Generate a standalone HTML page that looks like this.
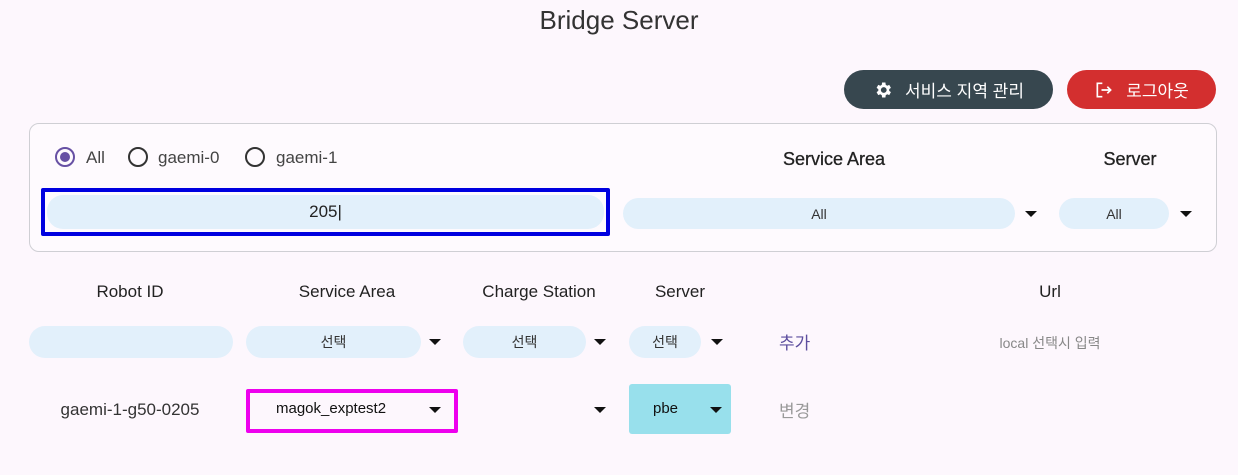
<!DOCTYPE html><html><head><meta charset="utf-8"><style>
*{box-sizing:border-box;margin:0;padding:0}
body{width:1238px;height:475px;background:#fdf7fd;font-family:"Liberation Sans","Noto Sans CJK KR",sans-serif;color:#222;position:relative;overflow:hidden}
.a{position:absolute}
.c{display:flex;align-items:center;justify-content:center}
.pill{position:absolute;background:#e2f0fb;border-radius:16px;display:flex;align-items:center;justify-content:center;font-size:14px;color:#333}
.tri{position:absolute;width:0;height:0;border-left:6px solid transparent;border-right:6px solid transparent;border-top:6px solid #111}
.h{position:absolute;font-size:17px;color:#222;transform:translateX(-50%);white-space:nowrap}
.rad{position:absolute;width:20px;height:20px;border:2px solid #333;border-radius:50%}
</style></head><body>
<div class="a" style="left:0;width:1238px;top:5px;text-align:center;font-size:26px;color:#333">Bridge Server</div>
<div class="a c" style="left:844px;top:70px;width:209px;height:39px;background:#37474f;border-radius:20px;color:#fff;font-size:17px;gap:12px">
<svg width="20" height="20" viewBox="0 0 24 24"><path fill="#fff" d="M19.4 13a7.5 7.5 0 0 0 0-2l2.1-1.6-2-3.5-2.5 1a7.4 7.4 0 0 0-1.7-1L14.9 3h-4l-.4 2.9a7.4 7.4 0 0 0-1.7 1l-2.5-1-2 3.5L6.4 11a7.5 7.5 0 0 0 0 2l-2.1 1.6 2 3.5 2.5-1a7.4 7.4 0 0 0 1.7 1l.4 2.9h4l.4-2.9a7.4 7.4 0 0 0 1.7-1l2.5 1 2-3.5zM12.9 15.5a3.5 3.5 0 1 1 0-7 3.5 3.5 0 0 1 0 7z"/></svg>서비스 지역 관리</div>
<div class="a c" style="left:1067px;top:70px;width:149px;height:39px;background:#d32f2f;border-radius:20px;color:#fff;font-size:17px;gap:12px">
<svg width="20" height="20" viewBox="0 0 24 24" fill="none" stroke="#fff" stroke-width="2"><path d="M10 4H4v16h6M9 12h11M16 8l4 4-4 4"/></svg>로그아웃</div>
<div class="a" style="left:29px;top:123px;width:1188px;height:129px;border:1px solid #cfcfd4;border-radius:10px;background:#fefafe"></div>
<div class="rad" style="left:55px;top:147px;border-color:#6750a4"><div class="a" style="left:3px;top:3px;width:10px;height:10px;border-radius:50%;background:#6750a4"></div></div>
<div class="a" style="left:86px;top:148px;font-size:17px;color:#444">All</div>
<div class="rad" style="left:128px;top:147px"></div>
<div class="a" style="left:158px;top:148px;font-size:17px;color:#444">gaemi-0</div>
<div class="rad" style="left:245px;top:147px"></div>
<div class="a" style="left:276px;top:148px;font-size:17px;color:#444">gaemi-1</div>
<div class="h" style="left:834px;top:149px;font-size:18px;-webkit-text-stroke:0.3px #222">Service Area</div>
<div class="h" style="left:1130px;top:149px;font-size:18px;-webkit-text-stroke:0.3px #222">Server</div>
<div class="a" style="left:41px;top:188px;width:569px;height:48px;border:4px solid #0000e0;border-radius:2px"></div>
<div class="pill" style="left:47px;top:195px;width:557px;height:34px;font-size:17px;color:#222">205|</div>
<div class="pill" style="left:623px;top:198px;width:392px;height:31px">All</div>
<div class="tri" style="left:1025px;top:211px"></div>
<div class="pill" style="left:1059px;top:198px;width:110px;height:31px">All</div>
<div class="tri" style="left:1180px;top:211px"></div>
<div class="h" style="left:130px;top:282px">Robot ID</div>
<div class="h" style="left:347px;top:282px">Service Area</div>
<div class="h" style="left:539px;top:282px">Charge Station</div>
<div class="h" style="left:680px;top:282px">Server</div>
<div class="h" style="left:1050px;top:282px">Url</div>
<div class="pill" style="left:29px;top:326px;width:204px;height:32px"></div>
<div class="pill" style="left:246px;top:326px;width:175px;height:32px">선택</div>
<div class="tri" style="left:429px;top:339px"></div>
<div class="pill" style="left:463px;top:326px;width:123px;height:32px">선택</div>
<div class="tri" style="left:594px;top:339px"></div>
<div class="pill" style="left:629px;top:326px;width:72px;height:32px">선택</div>
<div class="tri" style="left:711px;top:339px"></div>
<div class="a" style="left:779px;top:329px;font-size:17px;color:#5c4d9e">추가</div>
<div class="h" style="left:1050px;top:333px;font-size:14px;color:#888">local 선택시 입력</div>
<div class="h" style="left:130px;top:400px;color:#333">gaemi-1-g50-0205</div>
<div class="a" style="left:246px;top:389px;width:212px;height:44px;border:4px solid #ee00ee;border-radius:2px"></div>
<div class="a" style="left:276px;top:400px;font-size:15px;color:#111">magok_exptest2</div>
<div class="tri" style="left:429px;top:407px"></div>
<div class="tri" style="left:594px;top:407px"></div>
<div class="a" style="left:629px;top:384px;width:102px;height:50px;background:#98e0ec;border-radius:3px"></div>
<div class="a" style="left:653px;top:400px;font-size:15px;color:#111">pbe</div>
<div class="tri" style="left:710px;top:407px"></div>
<div class="a" style="left:779px;top:397px;font-size:17px;color:#999">변경</div>
</body></html>
